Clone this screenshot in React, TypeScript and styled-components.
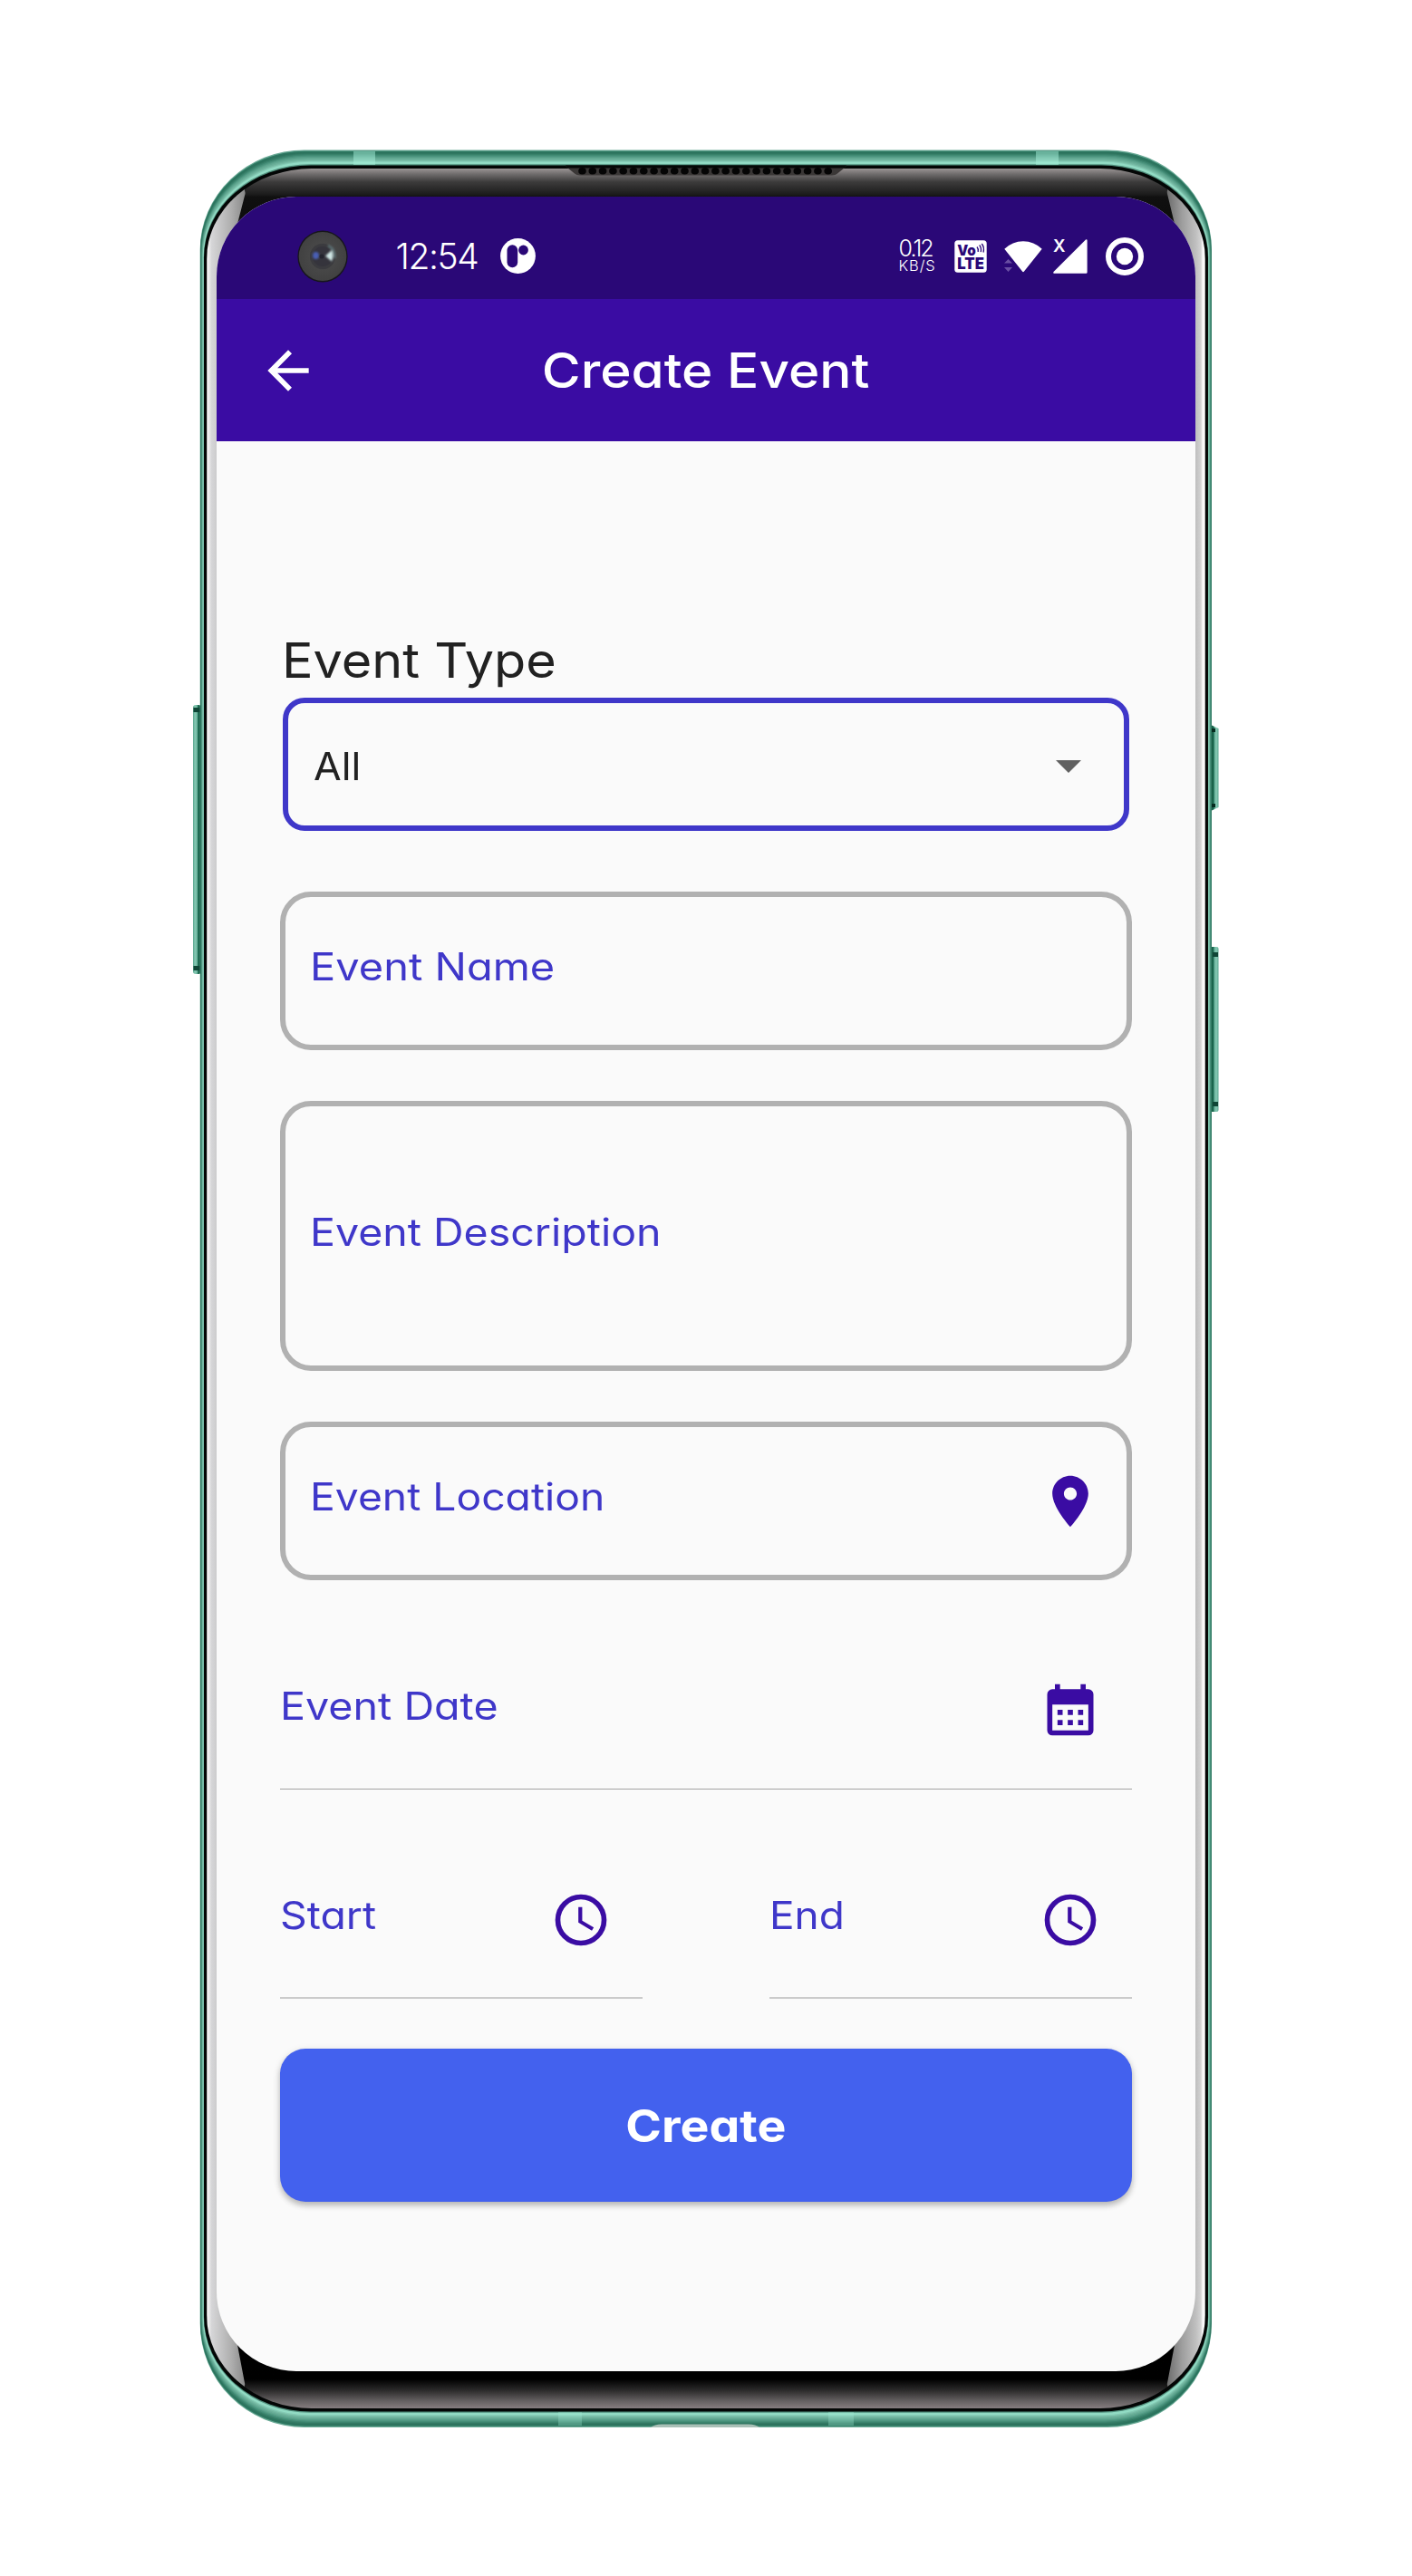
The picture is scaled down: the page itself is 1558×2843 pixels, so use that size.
import React from "react";
import styled, { createGlobalStyle } from "styled-components";

const GlobalStyle = createGlobalStyle`
  html, body { margin: 0; padding: 0; background: #ffffff; }
  * { box-sizing: border-box; }
  body { font-family: Inter, "Liberation Sans", sans-serif; font-feature-settings: "cv11"; }
`;

const PRIMARY = "#3a0ca3";
const LABEL = "#3f37c9";

/* ---------- page and phone ---------- */

const Page = styled.main`
  display: flex;
  justify-content: center;
  width: 1558px;
  height: 2843px;
  padding-top: 165px;
`;

const Phone = styled.div`
  position: relative;
  width: 1116px;
  height: 2514px;
  padding: 52px 18px 62px;
`;

const FrameArt = styled.svg`
  position: absolute;
  top: 0;
  left: -16px;
  width: 1148px;
  height: 2514px;
`;

const Screen = styled.section`
  position: relative;
  display: flex;
  flex-direction: column;
  width: 1080px;
  height: 2400px;
  overflow: hidden;
  border-radius: 88px;
  background: #fafafa;
`;

/* ---------- status bar ---------- */

const StatusBar = styled.header`
  display: flex;
  align-items: center;
  height: 113px;
  padding: 18px 57px 0 89px;
  background: #2a0877;
  color: #ffffff;
`;

const Time = styled.span`
  width: 98px;
  margin: 0 17px 0 52.5px;
  font-size: 39px;
  font-weight: 300;
  line-height: 44px;
  letter-spacing: -1.4px;
  white-space: nowrap;
`;

const StatusIcons = styled.div`
  display: flex;
  align-items: center;
  margin-left: auto;
`;

const NetSpeed = styled.div`
  display: flex;
  flex-direction: column;
  width: 44px;
  margin-right: 17px;
`;

const SpeedValue = styled.span`
  font-size: 25px;
  font-weight: 300;
  line-height: 21px;
  letter-spacing: -1.9px;
`;

const SpeedUnit = styled.span`
  font-size: 16.5px;
  font-weight: 300;
  line-height: 16px;
  letter-spacing: 0.9px;
`;

const Glyph = styled.svg<{ $w: number; $h: number; $gap?: number }>`
  flex: none;
  display: block;
  overflow: visible;
  width: ${(p) => p.$w}px;
  height: ${(p) => p.$h}px;
  margin-left: ${(p) => p.$gap ?? 0}px;
`;

/* ---------- app bar ---------- */

const AppBar = styled.div`
  display: grid;
  grid-template-columns: 1fr auto 1fr;
  align-items: center;
  height: 157px;
  padding: 0 45px;
  background: ${PRIMARY};
  color: #ffffff;
`;

const BackButton = styled.button`
  width: 68px;
  height: 68px;
  padding: 0;
  border: 0;
  background: none;
  color: inherit;
`;

const Title = styled.h1`
  margin: 0;
  font-size: 53.6px;
  font-weight: 500;
  line-height: 64px;
  transform: scaleX(1.092);
`;

/* ---------- form ---------- */

const Form = styled.form`
  display: flex;
  flex-direction: column;
  padding: 212px 70px 0;
`;

const TypeLabel = styled.label`
  margin: 0 0 11px 2px;
  color: #212121;
  font-size: 53.6px;
  line-height: 60px;
  transform: scaleX(1.073);
  transform-origin: left;
`;

const Select = styled.div`
  display: flex;
  align-items: center;
  justify-content: space-between;
  height: 147px;
  margin: 0 3px;
  padding: 4px 47.5px 0 28px;
  border: 6px solid ${LABEL};
  border-radius: 24px;
  color: #212121;
`;

const SelectValue = styled.span`
  font-size: 42px;
  line-height: 50px;
  transform: scaleX(1.06);
  transform-origin: left;
`;

const Outlined = styled.div<{ $height: number; $top: number }>`
  display: flex;
  align-items: center;
  justify-content: space-between;
  height: ${(p) => p.$height}px;
  margin-top: ${(p) => p.$top}px;
  padding: 0 28px 0 27px;
  border: 6px solid #b1b1b1;
  border-radius: 34px;
`;

const Underlined = styled.div<{ $height: number; $line: string }>`
  display: flex;
  flex: 1;
  align-items: center;
  justify-content: space-between;
  height: ${(p) => p.$height}px;
  padding-right: 34px;
  border-bottom: ${(p) => p.$line};
`;

const FieldLabel = styled.label<{ $stretch: number }>`
  padding-bottom: 9px;
  color: ${LABEL};
  font-size: 42px;
  line-height: 50px;
  white-space: nowrap;
  transform: scaleX(${(p) => p.$stretch});
  transform-origin: left;
`;

const DateRow = styled.div`
  display: flex;
  margin-top: 56px;
`;

const TimeRow = styled.div`
  display: flex;
  gap: 140px;
  margin-top: 58px;
`;

const CreateButton = styled.button`
  height: 169px;
  margin-top: 55px;
  padding: 1px 0 0;
  border: 0;
  border-radius: 28px;
  background: #4361ee;
  box-shadow: 0 4px 6px rgba(0, 0, 0, 0.22), 0 2px 10px rgba(0, 0, 0, 0.1);
  color: #ffffff;
  font-family: inherit;
  font-feature-settings: inherit;
  font-size: 49px;
  font-weight: 700;
`;

const CreateText = styled.span`
  display: inline-block;
  transform: scaleX(1.095);
`;

/* ---------- phone frame drawing ---------- */

type Shape = { l: number; t: number; r: number; b: number; rx: number; rt: number; rb: number };

const OUTER: Shape = { l: 220.7, t: 165.5, r: 1337, b: 2679, rx: 115, rt: 110, rb: 115 };
const RIM: Shape = { l: 225, t: 182.5, r: 1333, b: 2661.5, rx: 118, rt: 102, rb: 105 };
const GLASS: Shape = { l: 228, t: 186, r: 1330, b: 2658, rx: 116, rt: 100, rb: 103 };

const mix = (a: Shape, b: Shape, k: number): Shape => ({
  l: a.l + (b.l - a.l) * k,
  t: a.t + (b.t - a.t) * k,
  r: a.r + (b.r - a.r) * k,
  b: a.b + (b.b - a.b) * k,
  rx: a.rx + (b.rx - a.rx) * k,
  rt: a.rt + (b.rt - a.rt) * k,
  rb: a.rb + (b.rb - a.rb) * k,
});

const outline = ({ l, t, r, b, rx, rt, rb }: Shape) =>
  `M${l + rx} ${t}H${r - rx}A${rx} ${rt} 0 0 1 ${r} ${t + rt}V${b - rb}A${rx} ${rb} 0 0 1 ${r - rx} ${b}` +
  `H${l + rx}A${rx} ${rb} 0 0 1 ${l} ${b - rb}V${t + rt}A${rx} ${rt} 0 0 1 ${l + rx} ${t}Z`;

const METAL = [
  "#6aaa96", "#2f7963", "#2b735d", "#327963", "#3b846e", "#48917b", "#559d87",
  "#61a791", "#6bb09a", "#76baa4", "#84cab4", "#93dcc5", "#8fd8c1", "#4f8c7a",
];

const SPEAKER_HOLES = Array.from({ length: 25 }, (_, i) => 642.5 + i * 11.3);

const PhoneFrame = () => (
  <FrameArt viewBox="205 165 1148 2514" aria-hidden="true">
    <defs>
      <linearGradient id="glass" gradientUnits="userSpaceOnUse" x1="0" y1="186" x2="0" y2="2658">
        <stop offset="0" stopColor="#9a9494" />
        <stop offset="0.0025" stopColor="#6f6c6c" />
        <stop offset="0.006" stopColor="#3c3b3b" />
        <stop offset="0.0115" stopColor="#1c1c1c" />
        <stop offset="0.0127" stopColor="#101010" />
        <stop offset="0.03" stopColor="#0a0a0a" />
        <stop offset="0.987" stopColor="#000000" />
        <stop offset="0.992" stopColor="#2c2b2b" />
        <stop offset="0.9965" stopColor="#625e5f" />
        <stop offset="1" stopColor="#857d7f" />
      </linearGradient>
      <linearGradient id="left" gradientUnits="userSpaceOnUse" x1="228" y1="0" x2="272" y2="0">
        <stop offset="0" stopColor="#9c9c9c" />
        <stop offset="0.03" stopColor="#f6f6f6" />
        <stop offset="0.07" stopColor="#e8e8e8" />
        <stop offset="0.12" stopColor="#d6d6d8" />
        <stop offset="0.25" stopColor="#cccccd" />
        <stop offset="0.6" stopColor="#b0b0b0" />
        <stop offset="1" stopColor="#858585" />
      </linearGradient>
      <linearGradient id="right" gradientUnits="userSpaceOnUse" x1="1330" y1="0" x2="1286" y2="0">
        <stop offset="0" stopColor="#8f8f8f" />
        <stop offset="0.03" stopColor="#ffffff" />
        <stop offset="0.08" stopColor="#f0f0f0" />
        <stop offset="0.11" stopColor="#d2d2d2" />
        <stop offset="0.25" stopColor="#bebebe" />
        <stop offset="0.6" stopColor="#9c9c9c" />
        <stop offset="1" stopColor="#666666" />
      </linearGradient>
      <linearGradient id="key" x1="0" y1="0" x2="1" y2="0">
        <stop offset="0" stopColor="#5aa68f" />
        <stop offset="0.25" stopColor="#86c9b4" />
        <stop offset="0.5" stopColor="#6bb39c" />
        <stop offset="0.62" stopColor="#1c6b52" />
        <stop offset="1" stopColor="#17553f" />
      </linearGradient>
      <clipPath id="glassClip">
        <path d={outline(GLASS)} />
      </clipPath>
    </defs>

    <rect x="213" y="778" width="9" height="297" rx="3" fill="url(#key)" />
    <rect x="213.5" y="781" width="8" height="5" fill="#0f4636" />
    <rect x="213.5" y="1066" width="8" height="5" fill="#0f4636" />
    <g transform="translate(1558 0) scale(-1 1)">
      <path d="M213.500 804L222 800V895L213.500 891Z" fill="url(#key)" />
      <rect x="217" y="804" width="4" height="4" fill="#062b1f" />
      <rect x="217" y="887" width="4" height="4" fill="#062b1f" />
      <rect x="213.500" y="1045" width="9" height="182" rx="2" fill="url(#key)" />
      <rect x="214" y="1051" width="6" height="5" fill="#0f4636" />
      <rect x="214" y="1216" width="6" height="5" fill="#0f4636" />
    </g>

    {METAL.map((color, i) => (
      <path key={i} d={outline(mix(OUTER, RIM, i / METAL.length))} fill={color} />
    ))}
    <rect x="390" y="167" width="24" height="15" fill="#a6f0da" opacity="0.5" />
    <rect x="1143" y="167" width="25" height="15" fill="#a6f0da" opacity="0.5" />
    <rect x="616" y="2662" width="26" height="15" fill="#a6f0da" opacity="0.3" />
    <rect x="914" y="2662" width="28" height="15" fill="#a6f0da" opacity="0.3" />
    <path d="M718 2679Q722 2675.500 730 2675.500H826Q834 2675.500 838 2679Z" fill="#a9bfb6" />

    <path d={outline(RIM)} fill="#030605" />
    <path d={outline(GLASS)} fill="url(#glass)" />
    <g clipPath="url(#glassClip)">
      <path d="M200 186H258L268 207Q271 209 270.500 214L262 247V2588L270 2630Q271 2634 267 2638L200 2660Z" fill="url(#left)" />
      <path d="M1358 186H1300L1290 207Q1287 209 1288 214L1296 247V2588L1288 2630Q1287 2634 1291 2638L1358 2660Z" fill="url(#right)" />
    </g>

    <path d="M624 183.500H934L924 191.500Q922 193.500 918 193.500H640Q636 193.500 634 191.500Z" fill="#3a3736" />
    <path d="M624 182.500H934L932 185.500H626Z" fill="#050807" />
    {SPEAKER_HOLES.map((x) => (
      <ellipse key={x} cx={x} cy="188.800" rx="4.300" ry="3.800" fill="#050505" />
    ))}
  </FrameArt>
);

/* ---------- icons ---------- */

const Camera = () => (
  <Glyph $w={56} $h={58} viewBox="-28 -29 56 58">
    <defs>
      <radialGradient id="lens">
        <stop offset="0" stopColor="#2b2c36" />
        <stop offset="0.45" stopColor="#3c3c40" />
        <stop offset="0.55" stopColor="#474747" />
        <stop offset="1" stopColor="#414141" />
      </radialGradient>
      <filter id="soft" x="-50%" y="-50%" width="200%" height="200%">
        <feGaussianBlur stdDeviation="1" />
      </filter>
    </defs>
    <ellipse rx="27.600" ry="28.500" fill="#17161c" />
    <ellipse rx="26.300" ry="27" fill="url(#lens)" />
    <circle r="14" fill="#3b3b3f" />
    <circle r="11" fill="#35343c" />
    <g filter="url(#soft)">
      <ellipse cx="-7.500" cy="-1" rx="3.500" ry="4" fill="#4a5fb4" />
      <path d="M3 -0.500L10 -7Q13 -1 10 5.500Z" fill="#cfe6e4" />
      <path d="M6 -12Q14 -8 13.500 2" fill="none" stroke="#62797c" strokeWidth="2" />
    </g>
    <circle cx="-1" r="2.500" fill="#24242e" />
  </Glyph>
);

const AppBadge = () => (
  <Glyph $w={39} $h={39} viewBox="0 0 39 39">
    <circle cx="19.500" cy="19.500" r="19.400" fill="#ffffff" />
    <rect x="7.500" y="7.300" width="11.700" height="25" rx="5.800" fill="#2a0877" />
    <circle cx="25.500" cy="13" r="5.400" fill="#2a0877" />
  </Glyph>
);

const VolteText = styled.text`
  font-family: Inter, sans-serif;
  font-weight: 900;
  fill: #2a0877;
`;

const Volte = () => (
  <Glyph $w={36} $h={36} viewBox="0 0 36 36">
    <rect x="0.300" y="0.300" width="35.400" height="35.400" rx="3.500" fill="#ffffff" />
    <VolteText x="3.300" y="16.500" fontSize="16" textLength="20.500" lengthAdjust="spacingAndGlyphs">Vo</VolteText>
    <VolteText x="3.300" y="32.300" fontSize="17" textLength="29.500" lengthAdjust="spacingAndGlyphs">LTE</VolteText>
    <path d="M25 7.500Q26.800 9.500 26.200 13M27.700 5.500Q30.200 8.500 29.200 13.200M30.300 4Q33.400 8 32 13.500" fill="none" stroke="#2a0877" strokeWidth="1.300" />
  </Glyph>
);

const Wifi = () => (
  <Glyph $w={43} $h={36} $gap={18} viewBox="0 0 43 36">
    <path d="M1.300 9.800Q10 1.500 22 1.300Q34 1.500 42.700 9.800L23 34.500Q22 35.800 21 34.500Z" fill="#ffffff" />
    <path d="M1 25.500L5.500 21L10 25.500ZM1 30H10L5.500 35Z" fill="#6a4fa3" />
  </Glyph>
);

const SignalMark = styled.text`
  font-family: Inter, sans-serif;
  font-size: 19px;
  font-weight: 600;
  fill: #ffffff;
`;

const Signal = () => (
  <Glyph $w={38} $h={38} $gap={12.5} viewBox="0 0 38 38">
    <path d="M36 0.500Q37.600 -0.200 37.600 1.500V36.500Q37.600 37.700 36.400 37.700H1Q-0.500 37.500 0.500 36Z" fill="#ffffff" />
    <SignalMark x="0" y="14" textLength="13.500" lengthAdjust="spacingAndGlyphs">X</SignalMark>
  </Glyph>
);

const BatteryRing = () => (
  <Glyph $w={42} $h={42} $gap={20} viewBox="0 0 42 42">
    <circle cx="21" cy="21" r="18" fill="none" stroke="#ffffff" strokeWidth="6" />
    <circle cx="21" cy="21" r="9.200" fill="#ffffff" />
  </Glyph>
);

const BackArrow = () => (
  <Glyph $w={68} $h={68} viewBox="0 0 24 24">
    <path d="M20 11H7.830l5.590-5.590L12 4l-8 8 8 8 1.410-1.410L7.830 13H20v-2z" fill="currentColor" />
  </Glyph>
);

const Pin = () => (
  <Glyph $w={68} $h={68} viewBox="0 0 24 24">
    <path
      fill={PRIMARY}
      d="M12 2C8.130 2 5 5.130 5 9c0 5.250 7 13 7 13s7-7.750 7-13c0-3.870-3.130-7-7-7zm0 9.500c-1.380 0-2.500-1.120-2.500-2.500s1.120-2.500 2.500-2.500 2.500 1.120 2.500 2.500-1.120 2.500-2.500 2.500z"
    />
  </Glyph>
);

const Calendar = () => (
  <Glyph $w={68} $h={68} viewBox="0 0 24 24">
    <path
      fill={PRIMARY}
      fillRule="evenodd"
      d="M6 2H8V4H16V2H18V4H19A2 2 0 0 1 21 6V20A2 2 0 0 1 19 22H5A2 2 0 0 1 3 20V6A2 2 0 0 1 5 4H6ZM5 10V20H19V10ZM7 12H9V14H7ZM11 12H13V14H11ZM15 12H17V14H15ZM7 16H9V18H7ZM11 16H13V18H11ZM15 16H17V18H15Z"
    />
  </Glyph>
);

const Clock = () => (
  <Glyph $w={68} $h={68} viewBox="0 0 24 24">
    <circle cx="12" cy="12" r="9" fill="none" stroke={PRIMARY} strokeWidth="2" />
    <path d="M12.500 7H11v6l5.250 3.150.75-1.230-4.500-2.670z" fill={PRIMARY} />
  </Glyph>
);

const DropArrow = () => (
  <Glyph $w={28} $h={14} viewBox="0 0 28 14">
    <path d="M0 0H28L14 14Z" fill="#616161" />
  </Glyph>
);

/* ---------- app ---------- */

export default function App() {
  return (
    <>
      <GlobalStyle />
      <Page>
        <Phone>
          <PhoneFrame />
          <Screen>
            <StatusBar>
              <Camera />
              <Time>12:54</Time>
              <AppBadge />
              <StatusIcons>
                <NetSpeed>
                  <SpeedValue>0.12</SpeedValue>
                  <SpeedUnit>KB/S</SpeedUnit>
                </NetSpeed>
                <Volte />
                <Wifi />
                <Signal />
                <BatteryRing />
              </StatusIcons>
            </StatusBar>
            <AppBar>
              <BackButton type="button" aria-label="Back">
                <BackArrow />
              </BackButton>
              <Title>Create Event</Title>
            </AppBar>
            <Form>
              <TypeLabel>Event Type</TypeLabel>
              <Select>
                <SelectValue>All</SelectValue>
                <DropArrow />
              </Select>
              <Outlined $height={175} $top={67}>
                <FieldLabel $stretch={1.119}>Event Name</FieldLabel>
              </Outlined>
              <Outlined $height={298} $top={56}>
                <FieldLabel $stretch={1.107}>Event Description</FieldLabel>
              </Outlined>
              <Outlined $height={175} $top={56}>
                <FieldLabel $stretch={1.101}>Event Location</FieldLabel>
                <Pin />
              </Outlined>
              <DateRow>
                <Underlined $height={175} $line="1px solid #a3a3a3">
                  <FieldLabel $stretch={1.11}>Event Date</FieldLabel>
                  <Calendar />
                </Underlined>
              </DateRow>
              <TimeRow>
                <Underlined $height={173} $line="2px solid #cbcbcb">
                  <FieldLabel $stretch={1.104}>Start</FieldLabel>
                  <Clock />
                </Underlined>
                <Underlined $height={173} $line="2px solid #cbcbcb">
                  <FieldLabel $stretch={1.094}>End</FieldLabel>
                  <Clock />
                </Underlined>
              </TimeRow>
              <CreateButton type="button">
                <CreateText>Create</CreateText>
              </CreateButton>
            </Form>
          </Screen>
        </Phone>
      </Page>
    </>
  );
}
